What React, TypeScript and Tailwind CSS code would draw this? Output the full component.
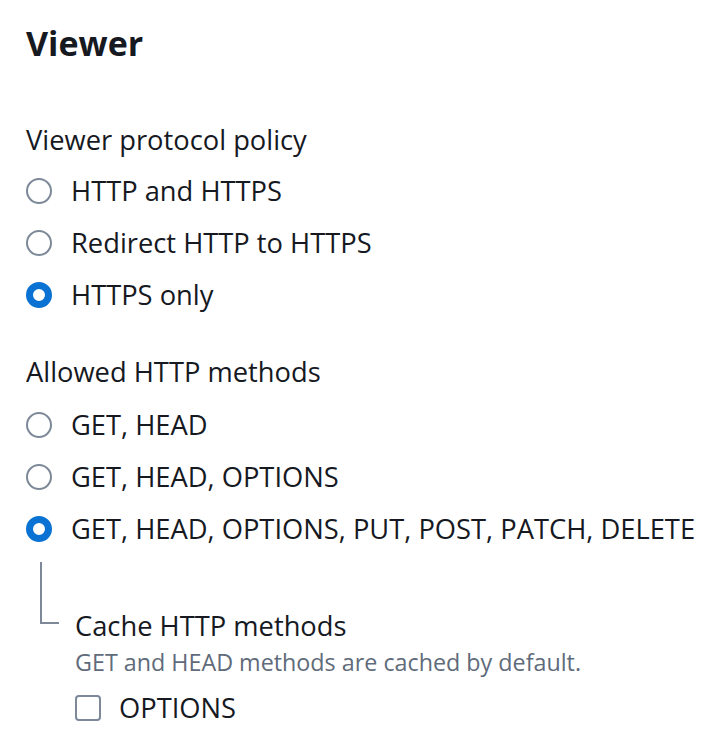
const font = { fontFamily: '"Open Sans", "Noto Sans", Arial, sans-serif' };

function Radio({ label, checked }: { label: string; checked?: boolean }) {
  return (
    <div className="flex h-[52px] items-center">
      <span
        className={
          checked
            ? "box-border h-[26px] w-[26px] shrink-0 rounded-full border-[7px] border-[#0972d3] bg-white"
            : "box-border h-[26px] w-[26px] shrink-0 rounded-full border-2 border-[#7d8998] bg-white"
        }
      />
      <span className="ml-[19px] text-[27.3px] leading-[36px] text-[#16191f]">{label}</span>
    </div>
  );
}

export default function App() {
  return (
    <div className="min-h-[742px] w-[728px] bg-white pl-[26px]" style={font}>
      <h2 className="pt-[21px] text-[34px] font-bold leading-[44px] text-[#16191f]">Viewer</h2>

      <div className="mt-[57px] text-[27.3px] leading-[36px] text-[#16191f]">Viewer protocol policy</div>
      <div className="mt-[7px]">
        <Radio label="HTTP and HTTPS" />
        <Radio label="Redirect HTTP to HTTPS" />
        <Radio label="HTTPS only" checked />
      </div>

      <div className="mt-[33px] text-[27.3px] leading-[36px] text-[#16191f]">Allowed HTTP methods</div>
      <div className="mt-[9px]">
        <Radio label="GET, HEAD" />
        <Radio label="GET, HEAD, OPTIONS" />
        <Radio label="GET, HEAD, OPTIONS, PUT, POST, PATCH, DELETE" checked />
      </div>

      {/* nested cache options under the selected method */}
      <div className="flex">
        <div className="w-[49px] shrink-0 pl-[14px] pt-[7px]">
          <div className="h-[62px] w-[19px] border-b-2 border-l-2 border-[#7d8998]" />
        </div>
        <div className="pt-[53px]">
          <div className="text-[27.3px] leading-[36px] text-[#16191f]">Cache HTTP methods</div>
          <div className="mt-[3px] text-[23.3px] leading-[30px] text-[#5f6b7a]">
            GET and HEAD methods are cached by default.
          </div>
          <label className="mt-[11px] flex h-[40px] items-center">
            <span className="box-border h-[26px] w-[26px] shrink-0 rounded-[4px] border-2 border-[#7d8998] bg-white" />
            <span className="ml-[18px] text-[27.3px] leading-[36px] text-[#16191f]">OPTIONS</span>
          </label>
        </div>
      </div>
    </div>
  );
}
